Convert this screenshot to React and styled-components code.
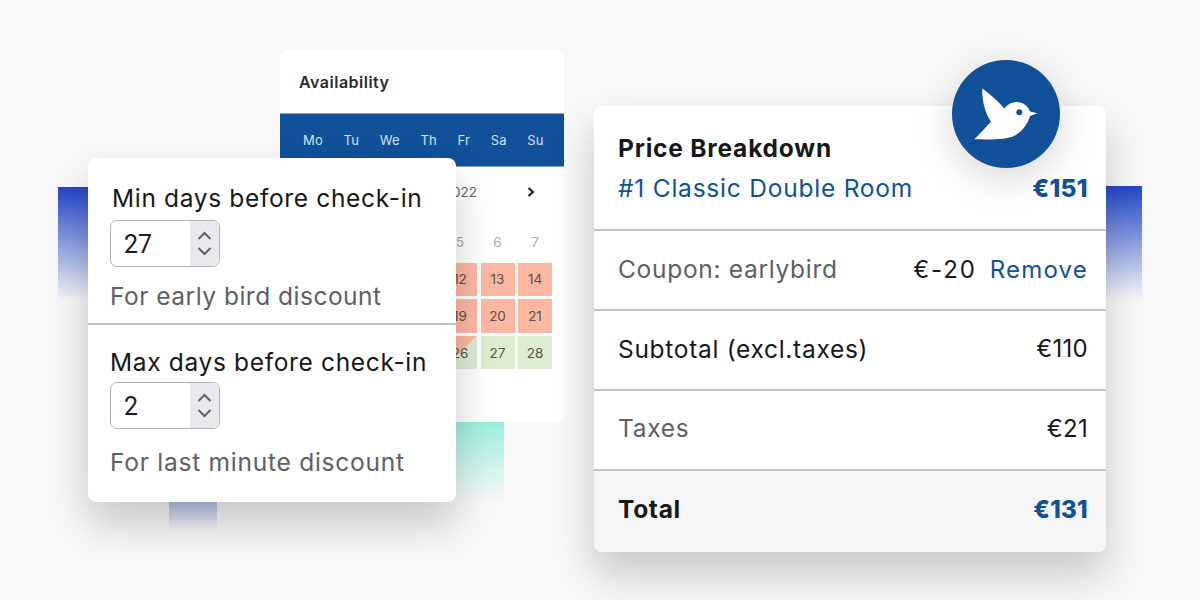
import React from 'react'
import styled, { createGlobalStyle } from 'styled-components'

const GlobalStyle = createGlobalStyle`
  html, body {
    margin: 0;
    padding: 0;
    background: #f8f8f8;
  }
  * {
    box-sizing: border-box;
  }
`

const Canvas = styled.div`
  position: relative;
  width: 1200px;
  height: 600px;
  overflow: hidden;
  background: #f8f8f8;
  font-family: Inter, "Liberation Sans", sans-serif;
  color: #17181a;
`

const Fade = styled.div`
  position: absolute;
  left: ${props => props.x}px;
  top: ${props => props.y}px;
  width: ${props => props.w}px;
  height: ${props => props.h}px;
  background: linear-gradient(${props => props.from}, ${props => props.to});
`

const CalendarCard = styled.div`
  position: absolute;
  left: 280px;
  top: 50px;
  width: 284px;
  height: 372px;
  background: #fff;
  border-radius: 7px;
  overflow: hidden;
`

const CalendarTitle = styled.h3`
  margin: 0;
  height: 63px;
  padding: 22px 0 0 19px;
  font-size: 16px;
  line-height: 20px;
  font-weight: 600;
  letter-spacing: 0.5px;
  color: #2b2b2b;
`

const WeekBar = styled.div`
  display: flex;
  gap: 20.6px;
  height: 54px;
  padding-left: 23px;
  align-items: center;
  background: #10519a;
  border-top: 1px solid #7fa6cf;
  border-bottom: 1px solid #7fa6cf;
  color: #d8e3f0;
  font-size: 13px;
  letter-spacing: 0.2px;
`

const MonthRow = styled.div`
  display: flex;
  align-items: center;
  height: 50px;
  padding-right: 28px;
  font-size: 13.5px;
  color: #666;
`

const MonthName = styled.span`
  margin-left: auto;
  margin-right: 49px;
`

const DayHead = styled.div`
  display: grid;
  grid-template-columns: repeat(7, 34px);
  column-gap: 3.5px;
  padding: 4px 0 0 13px;
  height: 45.7px;
  align-items: center;
  font-size: 13.5px;
  color: #a9a9a9;
  text-align: center;
`

const DayGrid = styled.div`
  display: grid;
  grid-template-columns: repeat(7, 34px);
  grid-auto-rows: 33.3px;
  gap: 3.4px 3.5px;
  padding-left: 13px;
`

const dayColors = {
  booked: '#feb8a2',
  free: '#dcedd2',
  split: 'linear-gradient(135deg, #feb8a2 50%, #dcedd2 50%)',
}

const DayCell = styled.div`
  display: flex;
  align-items: center;
  justify-content: center;
  font-size: 13.5px;
  color: #55524c;
  background: ${props => dayColors[props.kind]};
`

const MonthCaret = styled.svg`
  width: 10px;
  height: 12px;
  fill: none;
  stroke: #1c1c1c;
  stroke-width: 2;
`

const SettingsCard = styled.div`
  position: absolute;
  left: 88px;
  top: 158px;
  width: 368px;
  height: 344px;
  background: #fff;
  border-radius: 8px;
  box-shadow: 0 22px 40px rgba(0, 0, 0, 0.2);
`

const SettingBlock = styled.div`
  height: ${props => props.h}px;
  padding: ${props => props.top}px 0 0 22px;
  border-bottom: ${props => (props.line ? '2px solid #c4c4c4' : 'none')};
`

const SettingLabel = styled.div`
  margin-left: ${props => props.shift || 0}px;
  font-size: 24.5px;
  line-height: 32px;
  font-weight: 400;
  letter-spacing: 0.66px;
  white-space: nowrap;
`

const NumberBox = styled.div`
  display: flex;
  width: 110px;
  height: 47px;
  margin-top: ${props => props.top}px;
  border: 1.5px solid #b4b4b8;
  border-radius: 7px;
  overflow: hidden;
  background: #fff;
`

const NumberValue = styled.div`
  flex: 1;
  padding: 2px 0 0 13px;
  font-family: Roboto, "Liberation Sans", sans-serif;
  font-size: 25px;
  line-height: 44px;
  color: #1d1d1f;
`

const Spinner = styled.div`
  display: flex;
  flex-direction: column;
  align-items: center;
  justify-content: center;
  gap: 5px;
  width: 29px;
  background: #e9e9ed;
`

const SpinnerArrow = styled.svg`
  width: 15px;
  height: 10px;
  fill: none;
  stroke: #5f6368;
  stroke-width: 2;
`

const SettingHint = styled.div`
  margin-top: ${props => props.gap}px;
  font-size: 24.5px;
  line-height: 32px;
  letter-spacing: ${props => props.spacing}px;
  color: #5b6166;
  white-space: nowrap;
`

const PriceCard = styled.div`
  position: absolute;
  left: 594px;
  top: 106px;
  width: 512px;
  height: 446px;
  display: flex;
  flex-direction: column;
  background: #fff;
  border-radius: 8px;
  overflow: hidden;
  box-shadow: 0 22px 40px rgba(0, 0, 0, 0.2);
`

const PriceHead = styled.div`
  height: 125px;
  padding: 26px 18px 0 24px;
  border-bottom: 2px solid #c4c4c4;
`

const PriceTitle = styled.div`
  font-size: 24.5px;
  line-height: 32px;
  font-weight: 700;
  letter-spacing: 0.8px;
`

const PriceRoom = styled.div`
  display: flex;
  justify-content: space-between;
  align-items: center;
  margin-top: 8px;
  font-size: 24.5px;
  line-height: 32px;
  letter-spacing: 0.78px;
  color: #10519a;
`

const PriceRow = styled.div`
  display: flex;
  align-items: center;
  height: 80px;
  padding: 0 18px ${props => props.lift}px 24px;
  font-size: 24px;
  border-bottom: ${props => (props.last ? 'none' : '2px solid #c4c4c4')};
  background: ${props => (props.last ? '#f6f6f6' : '#fff')};
  flex: ${props => (props.last ? 1 : 'none')};
`

const RowLabel = styled.span`
  margin-right: auto;
  font-size: 24.5px;
  letter-spacing: 0.7px;
  color: ${props => (props.muted ? '#5b6166' : '#17181a')};
  font-weight: ${props => (props.bold ? 700 : 400)};
`

const RowValue = styled.span`
  letter-spacing: ${props => (props.wide ? 1.9 : 0.3)}px;
  color: ${props => (props.accent ? '#10519a' : '#17181a')};
  font-weight: ${props => (props.accent ? 800 : 400)};
`

const RemoveLink = styled.a`
  margin-left: 13px;
  letter-spacing: 1.2px;
  color: #10519a;
`

const LogoBadge = styled.div`
  position: absolute;
  left: 952px;
  top: 60px;
  width: 108px;
  height: 108px;
  border-radius: 50%;
  background: #10519a;
  box-shadow: 0 10px 40px rgba(0, 0, 0, 0.16);
`

const BirdIcon = styled.svg`
  display: block;
  width: 108px;
  height: 108px;
`

const weekDays = ['Mo', 'Tu', 'We', 'Th', 'Fr', 'Sa', 'Su']

const dayKind = day => {
  if (day === 26) return 'split'
  return day > 26 ? 'free' : 'booked'
}

// the first four columns sit under the settings card, no label needed there
const dayLabel = (day, index) => (index % 7 >= 4 ? day : '')

const headDays = [1, 2, 3, 4, 5, 6, 7]
const gridDays = Array.from({ length: 21 }, (_, i) => i + 8)

const ArrowUp = () => (
  <SpinnerArrow viewBox="0 0 15 10">
    <path d="M1.5 8 L7.5 2 L13.5 8" />
  </SpinnerArrow>
)

const ArrowDown = () => (
  <SpinnerArrow viewBox="0 0 15 10">
    <path d="M1.5 2 L7.5 8 L13.5 2" />
  </SpinnerArrow>
)

const NumberField = ({ value, top }) => (
  <NumberBox top={top}>
    <NumberValue>{value}</NumberValue>
    <Spinner>
      <ArrowUp />
      <ArrowDown />
    </Spinner>
  </NumberBox>
)

const App = () => (
  <Canvas>
    <GlobalStyle />
    <Fade x={58} y={187} w={60} h={114} from="#2147c9" to="rgba(255,255,255,0)" />
    <Fade x={1080} y={186} w={62} h={114} from="#2147c9" to="rgba(255,255,255,0)" />
    <Fade x={169} y={440} w={48} h={90} from="#2147c9" to="rgba(255,255,255,0)" />
    <Fade x={440} y={410} w={64} h={92} from="#8eecdc" to="rgba(255,255,255,0)" />

    <CalendarCard>
      <CalendarTitle>Availability</CalendarTitle>
      <WeekBar>
        {weekDays.map(day => (
          <span key={day}>{day}</span>
        ))}
      </WeekBar>
      <MonthRow>
        <MonthName>2022</MonthName>
        <MonthCaret viewBox="0 0 10 12">
          <path d="M2.5 2 L7 6 L2.5 10" />
        </MonthCaret>
      </MonthRow>
      <DayHead>
        {headDays.map((day, i) => (
          <span key={day}>{dayLabel(day, i)}</span>
        ))}
      </DayHead>
      <DayGrid>
        {gridDays.map((day, i) => (
          <DayCell key={day} kind={dayKind(day)}>
            {dayLabel(day, i)}
          </DayCell>
        ))}
      </DayGrid>
    </CalendarCard>

    <SettingsCard>
      <SettingBlock h={167} top={24} line>
        <SettingLabel shift={2}>Min days before check-in</SettingLabel>
        <NumberField value="27" top={6} />
        <SettingHint gap={13} spacing={0.5}>For early bird discount</SettingHint>
      </SettingBlock>
      <SettingBlock h={177} top={21}>
        <SettingLabel>Max days before check-in</SettingLabel>
        <NumberField value="2" top={4} />
        <SettingHint gap={17} spacing={0.75}>For last minute discount</SettingHint>
      </SettingBlock>
    </SettingsCard>

    <PriceCard>
      <PriceHead>
        <PriceTitle>Price Breakdown</PriceTitle>
        <PriceRoom>
          <span>#1 Classic Double Room</span>
          <RowValue accent>€151</RowValue>
        </PriceRoom>
      </PriceHead>
      <PriceRow lift={2}>
        <RowLabel muted>Coupon: earlybird</RowLabel>
        <RowValue wide>€-20</RowValue>
        <RemoveLink>Remove</RemoveLink>
      </PriceRow>
      <PriceRow lift={3}>
        <RowLabel>Subtotal (excl.taxes)</RowLabel>
        <RowValue>€110</RowValue>
      </PriceRow>
      <PriceRow lift={4}>
        <RowLabel muted>Taxes</RowLabel>
        <RowValue>€21</RowValue>
      </PriceRow>
      <PriceRow last lift={5}>
        <RowLabel bold>Total</RowLabel>
        <RowValue accent>€131</RowValue>
      </PriceRow>
    </PriceCard>

    <LogoBadge>
      <BirdIcon viewBox="0 0 108 108">
        <path
          fill="#fff"
          d="M30.3 28.5 C38 34 46 41 52.3 48.5 C56 44 60 42 64.5 42 C71 42 76 46 78 51.5 L85.5 53.3 L78 56 C76 63 71 71 63 75.5 C54 80 38 79.5 22.3 79.3 C28.5 73 34 67 39 61.7 C33 53 30 41 30.3 28.5 Z"
        />
        <circle cx="67.3" cy="52.3" r="3" fill="#10519a" />
      </BirdIcon>
    </LogoBadge>
  </Canvas>
)

export default App
